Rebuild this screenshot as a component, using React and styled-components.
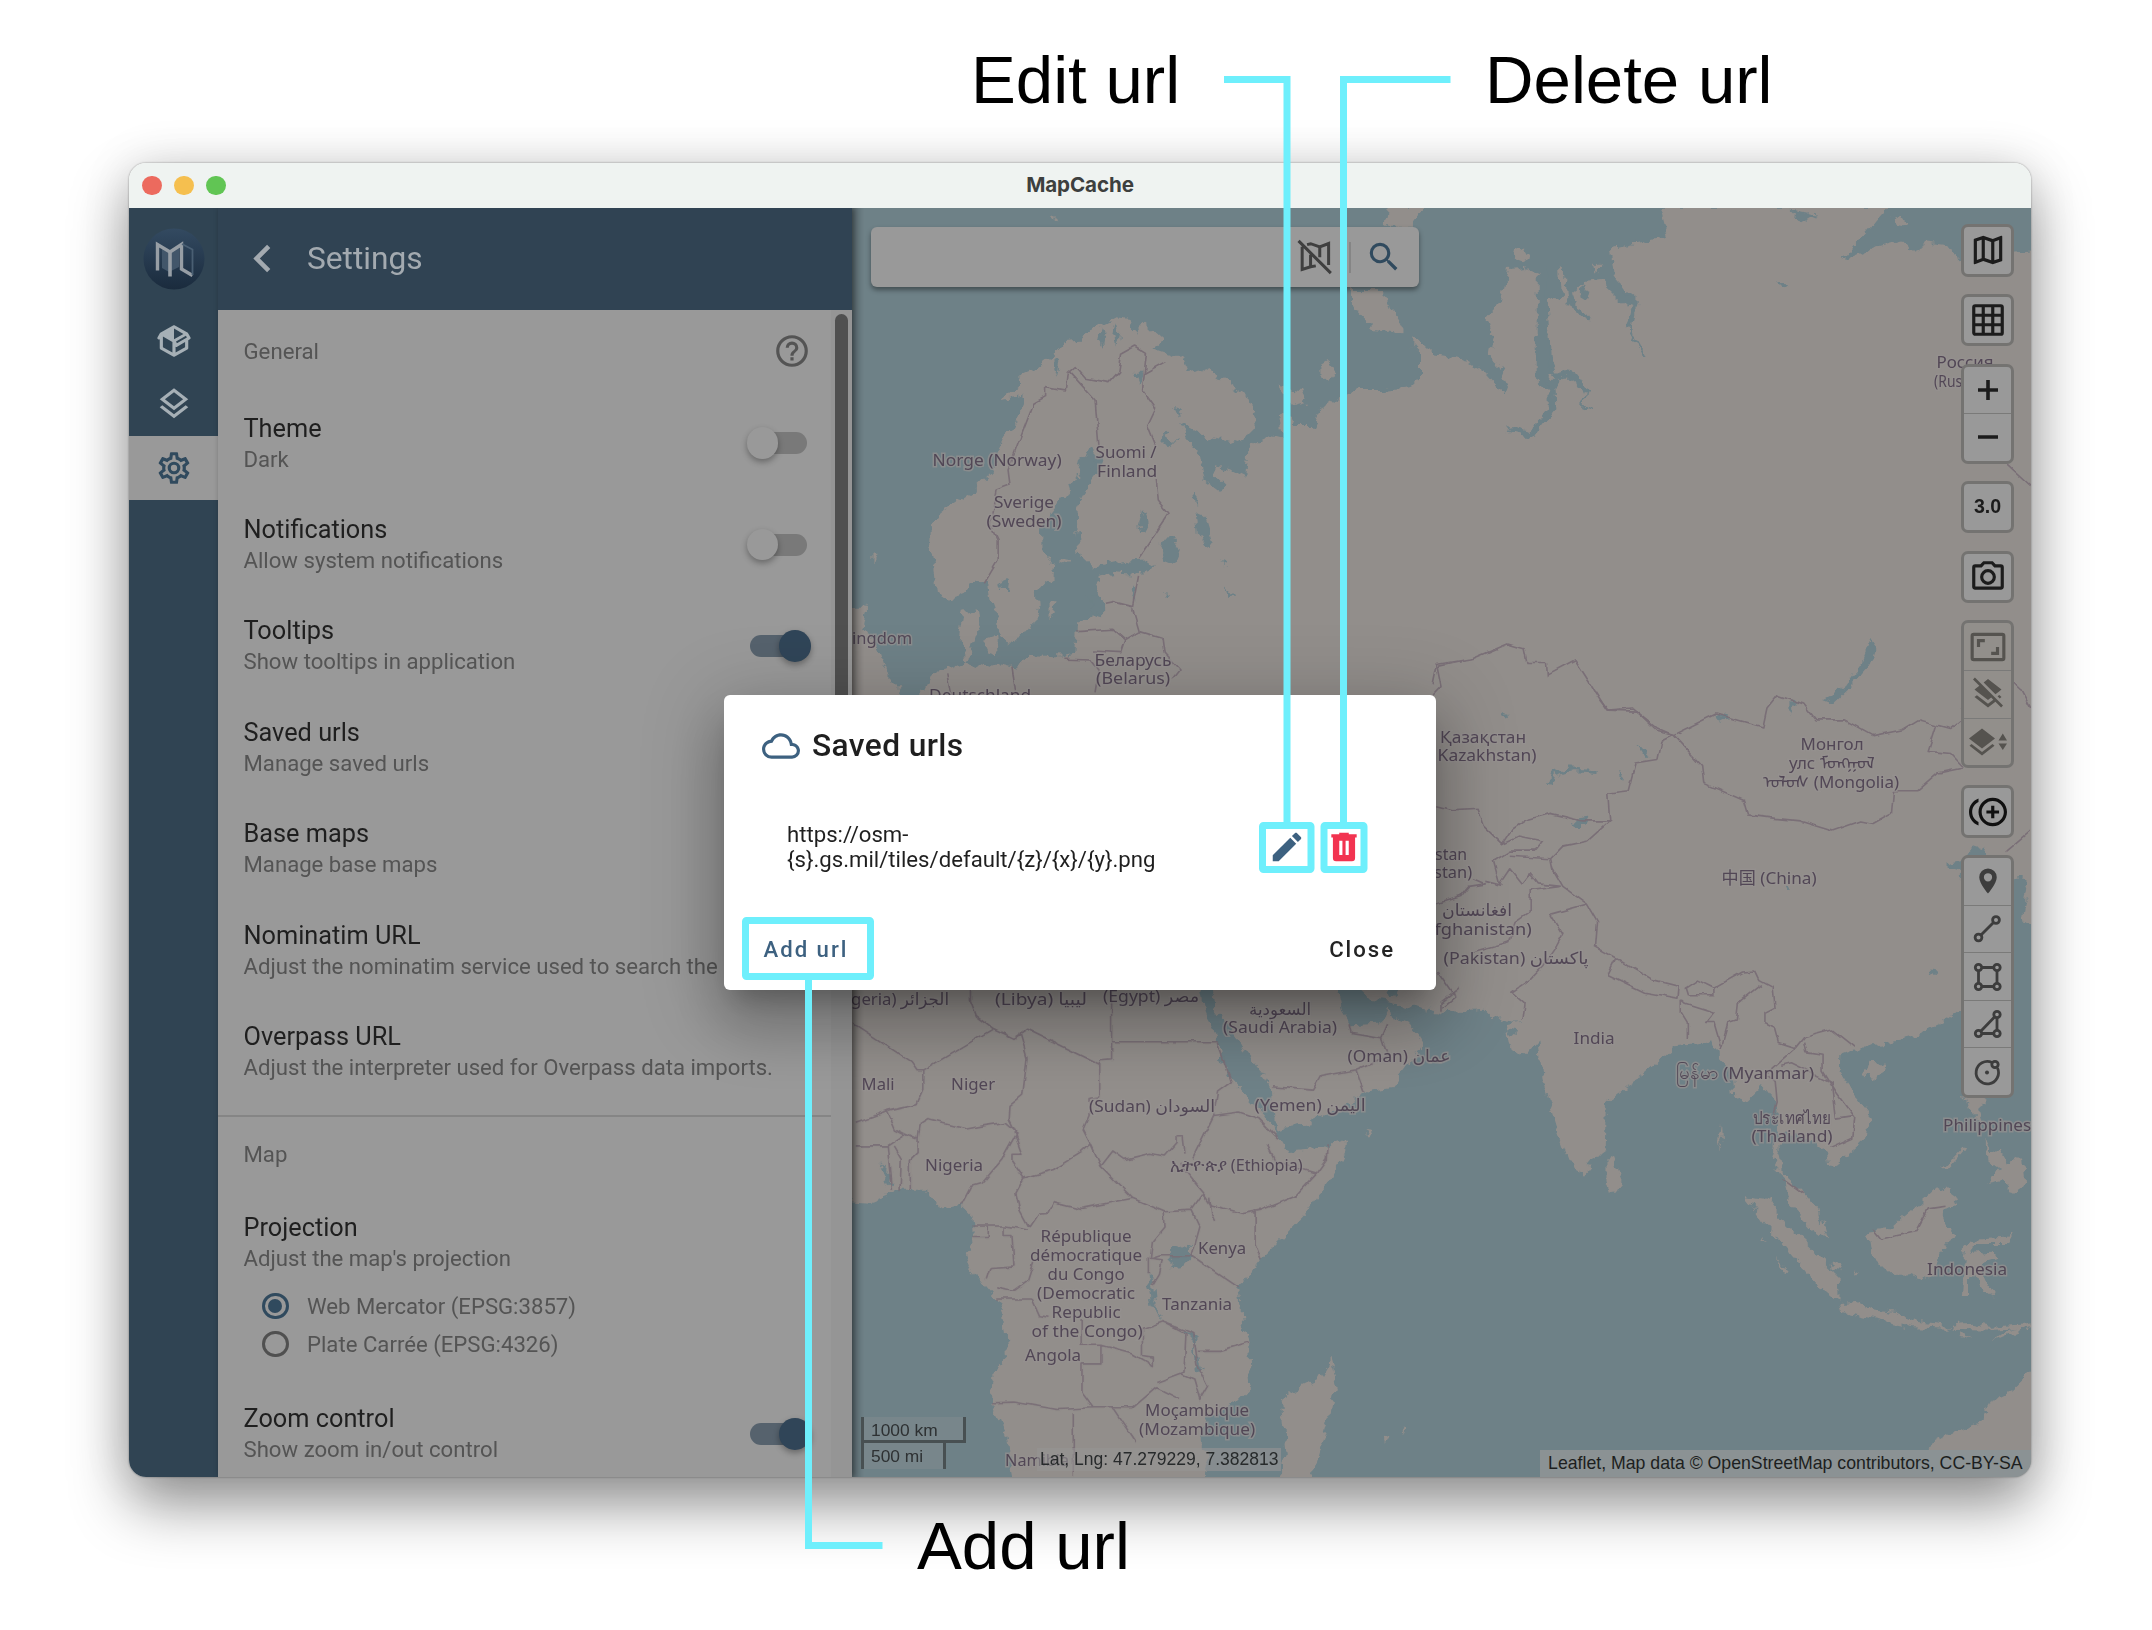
import React from 'react';
import styled, { createGlobalStyle } from 'styled-components';

const GlobalStyle = createGlobalStyle`
  * { box-sizing: border-box; }
  body { margin: 0; background: #fff; }
`;

const Page = styled.main`
  position: relative;
  width: 2152px;
  height: 1630px;
  padding: 163px 0 0 129px;
  overflow: hidden;
  background: #fff;
  font-family: Roboto, sans-serif;
`;

const Window = styled.section`
  position: relative;
  display: flex;
  flex-direction: column;
  width: 1902px;
  height: 1313.5px;
  border-radius: 17px;
  box-shadow: 0 0 2px rgba(0, 0, 0, 0.45), 0 28px 58px rgba(0, 0, 0, 0.42), 0 0 50px rgba(0, 0, 0, 0.1);
`;

const TitleBar = styled.header`
  display: grid;
  grid-template-columns: 1fr auto 1fr;
  align-items: center;
  height: 45px;
  flex: none;
  padding-left: 13px;
  border-radius: 17px 17px 0 0;
  background: #eff3f1;
`;

const Lights = styled.div`
  display: flex;
  gap: 12.5px;
`;

const Light = styled.span`
  width: 19.5px;
  height: 19.5px;
  border-radius: 50%;
  background: ${(p) => p.$color};
`;

const AppTitle = styled.h1`
  margin: 0 13px 0 0;
  color: #3d3f3e;
  font: 700 20.6px/1 Inter, sans-serif;
  letter-spacing: -0.1px;
`;

const Body = styled.div`
  display: flex;
  flex: 1;
  min-height: 0;
  overflow: hidden;
  border-radius: 0 0 17px 17px;
`;

const Rail = styled.nav`
  display: flex;
  flex-direction: column;
  flex: none;
  width: 89px;
  background: #304453;
`;

const LogoSlot = styled.div`
  display: flex;
  align-items: center;
  justify-content: center;
  height: 101px;
`;

const RailItem = styled.div`
  display: flex;
  align-items: center;
  justify-content: center;
  height: 63.6px;
  padding-left: 1px;
  color: ${(p) => (p.$active ? '#304a5e' : '#a6b0b6')};
  background: ${(p) => (p.$active ? '#999' : 'transparent')};
`;

const Panel = styled.aside`
  position: relative;
  z-index: 1;
  display: flex;
  flex-direction: column;
  flex: none;
  width: 634px;
  background: #999;
  box-shadow: 2px 0 6px rgba(0, 0, 0, 0.4);
`;

const PanelHeader = styled.header`
  display: flex;
  align-items: center;
  gap: 17px;
  height: 101.5px;
  flex: none;
  padding-left: 17px;
  background: #304353;
  color: #a3aab0;
`;

const PanelTitle = styled.h2`
  margin: 0;
  font-weight: 400;
  font-size: 31.7px;
  line-height: 1;
`;

const PanelBody = styled.div`
  display: flex;
  flex: 1;
  min-height: 0;
  overflow: hidden;
`;

const Settings = styled.div`
  flex: 1;
  min-width: 0;
`;

const ScrollTrack = styled.div`
  flex: none;
  width: 21px;
  padding: 4px 4px 0;
  background: #959595;
`;

const ScrollThumb = styled.div`
  height: 590px;
  border-radius: 7px;
  background: #505050;
`;

const Subheader = styled.div`
  display: flex;
  align-items: center;
  justify-content: space-between;
  height: ${(p) => p.$height}px;
  padding: 0 20px 1px 25.5px;
  color: #545454;
  font-size: 22.2px;
`;

const Row = styled.div`
  display: flex;
  align-items: center;
  justify-content: space-between;
  height: 101.4px;
  padding: 0 20px 0 25.5px;
`;

const RowText = styled.div`
  display: flex;
  flex-direction: column;
  gap: 5px;
  white-space: nowrap;
`;

const RowTitle = styled.div`
  color: #1f1f1f;
  font-size: 25.3px;
  line-height: 27px;
`;

const RowSub = styled.div`
  color: #545454;
  font-size: 22.17px;
  line-height: 25px;
`;

const Divider = styled.hr`
  height: 2px;
  margin: 12.5px 0 0;
  border: 0;
  background: #858585;
`;

const Track = styled.div`
  display: flex;
  align-items: center;
  justify-content: ${(p) => (p.$on ? 'flex-end' : 'flex-start')};
  flex: none;
  width: 57px;
  height: 22px;
  margin-right: 4px;
  border-radius: 11px;
  background: ${(p) => (p.$on ? '#56626d' : '#797979')};
`;

const Thumb = styled.span`
  width: 31.7px;
  height: 31.7px;
  flex: none;
  margin: 0 -3.5px;
  border-radius: 50%;
  background: ${(p) => (p.$on ? '#304558' : '#999')};
  box-shadow: 0 3px 6px rgba(0, 0, 0, 0.32);
`;

const RadioGroup = styled.div`
  display: flex;
  flex-direction: column;
  margin-top: -6px;
  padding: 0 0 20px 44px;
`;

const RadioRow = styled.label`
  display: flex;
  align-items: center;
  gap: 18.5px;
  height: 38px;
  color: #545454;
  font-size: 22.17px;
`;

const RadioDot = styled.span`
  display: flex;
  align-items: center;
  justify-content: center;
  width: 26.5px;
  height: 26.5px;
  border: 3px solid ${(p) => (p.$on ? '#304a5e' : '#505050')};
  border-radius: 50%;

  &::after {
    content: '';
    width: 14px;
    height: 14px;
    border-radius: 50%;
    background: ${(p) => (p.$on ? '#304a5e' : 'transparent')};
  }
`;

const MapPane = styled.div`
  position: relative;
  flex: 1;
  min-width: 0;
  overflow: hidden;
  background: #6e8187;
`;

const MapDrawing = styled.svg`
  display: block;
`;

const SearchBar = styled.div`
  position: absolute;
  top: 19px;
  left: 18.5px;
  display: flex;
  align-items: center;
  justify-content: flex-end;
  width: 548px;
  height: 60px;
  padding-right: 16px;
  border-radius: 6px;
  background: #999;
  box-shadow: 0 3px 5px rgba(0, 0, 0, 0.4);
  color: #304a5e;
`;

const SearchDivider = styled.span`
  width: 1.5px;
  height: 31px;
  margin: 0 14px 0 15px;
  background: #858585;
`;

const Controls = styled.div`
  position: absolute;
  top: 16px;
  right: 17px;
  display: flex;
  flex-direction: column;
  gap: 17.2px;
`;

const ControlGroup = styled.div`
  width: 53px;
  border: 3px solid #747371;
  border-radius: 7px;
  background: ${(p) => (p.$dim ? '#928f8b' : '#999')};
  overflow: hidden;
`;

const ControlButton = styled.div`
  display: flex;
  align-items: center;
  justify-content: center;
  height: 46.6px;
  color: ${(p) => p.$tone || '#1c1c1c'};
  font: 700 19.6px/1 'Liberation Sans', sans-serif;

  & + & {
    height: 47.55px;
    border-top: 1.5px solid #7a7a79;
  }
`;

const ScaleBox = styled.div`
  position: absolute;
  left: 9px;
  bottom: 8px;
  display: flex;
  flex-direction: column;
  align-items: flex-start;
`;

const ScaleLine = styled.div`
  width: ${(p) => p.$width}px;
  height: 26px;
  padding-left: 7px;
  border: 3px solid #485052;
  border-top: 0;
  border-bottom-width: ${(p) => (p.$lower ? 0 : 3)}px;
  background: rgba(153, 153, 153, 0.25);
  color: #2e3133;
  font: 17.4px/27.500px 'Liberation Sans', sans-serif;
`;

const Coordinates = styled.div`
  position: absolute;
  left: 185px;
  bottom: 6px;
  padding: 0 3px;
  background: rgba(150, 149, 148, 0.6);
  color: #272a2b;
  font: 17.5px/23px 'Liberation Sans', sans-serif;
  white-space: nowrap;
`;

const Attribution = styled.div`
  position: absolute;
  right: 0;
  bottom: 0;
  padding: 0 8.5px 0 8px;
  background: #8b9294;
  color: #1d1f20;
  font: 17.7px/27px 'Liberation Sans', sans-serif;
  white-space: nowrap;
`;

const Dialog = styled.section`
  position: absolute;
  top: 531.5px;
  left: 595px;
  z-index: 3;
  display: flex;
  flex-direction: column;
  width: 712px;
  height: 295px;
  border-radius: 6px;
  background: #fff;
  box-shadow: 0 17px 24px -11px rgba(0, 0, 0, 0.22), 0 38px 60px 5px rgba(0, 0, 0, 0.16),
    0 14px 73px 13px rgba(0, 0, 0, 0.18);
`;

const DialogTitle = styled.h3`
  display: flex;
  align-items: center;
  gap: 12.5px;
  margin: 0;
  padding: 32px 0 0 37.5px;
  color: #1f1f1f;
  font-weight: 500;
  font-size: 31.7px;
  line-height: 38px;
  letter-spacing: 0.4px;
`;

const UrlRow = styled.div`
  display: flex;
  align-items: center;
  margin-top: 57px;
  padding: 0 73px 0 63px;
  color: #1f1f1f;
  font-size: 22.17px;
  line-height: 25px;
`;

const UrlText = styled.div`
  flex: 1;
`;

const UrlActions = styled.div`
  display: flex;
  gap: 19px;
`;

const DialogActions = styled.footer`
  display: flex;
  justify-content: space-between;
  padding: 64px 41px 0 39.5px;
`;

const TextButton = styled.button`
  padding: 0;
  border: 0;
  background: none;
  color: ${(p) => p.$color};
  font: 500 22.17px/26px Roboto, sans-serif;
  letter-spacing: 1.98px;
`;

const CalloutLines = styled.svg`
  position: absolute;
  inset: 0;
  z-index: 4;
`;

const CalloutText = styled.div`
  position: absolute;
  top: ${(p) => p.$top}px;
  left: ${(p) => p.$left}px;
  color: #000;
  font: 67.2px/76px 'Liberation Sans', sans-serif;
  white-space: nowrap;
`;

const paths = {
  package:
    'M2,10.96C1.5,10.68 1.35,10.07 1.63,9.59L3.13,7C3.24,6.8 3.41,6.66 3.6,6.58L11.43,2.18C11.59,2.06 11.79,2 12,2C12.21,2 12.41,2.06 12.57,2.18L20.47,6.62C20.66,6.72 20.82,6.88 20.91,7.08L22.36,9.6C22.64,10.08 22.47,10.69 22,10.96L21,11.54V16.5C21,16.88 20.79,17.21 20.47,17.38L12.57,21.82C12.41,21.94 12.21,22 12,22C11.79,22 11.59,21.94 11.43,21.82L3.53,17.38C3.21,17.21 3,16.88 3,16.5V10.96C2.7,11.13 2.32,11.14 2,10.96M12,4.15V4.15L12,10.85V10.85L17.96,7.5L12,4.15M5,15.91L11,19.29V12.58L5,9.21V15.91M19,15.91V12.69L14,15.59C13.67,15.77 13.3,15.76 13,15.6V19.29L19,15.91M13.85,13.36L20.13,9.73L19.55,8.72L13.27,12.35L13.85,13.36Z',
  layersOutline:
    'M12,18.54L19.37,12.8L21,14.07L12,21.07L3,14.07L4.62,12.81L12,18.54M12,16L3,9L12,2L21,9L12,16M12,4.53L6.26,9L12,13.47L17.74,9L12,4.53Z',
  cog: 'M12,8A4,4 0 0,1 16,12A4,4 0 0,1 12,16A4,4 0 0,1 8,12A4,4 0 0,1 12,8M12,10A2,2 0 0,0 10,12A2,2 0 0,0 12,14A2,2 0 0,0 14,12A2,2 0 0,0 12,10M10,22C9.75,22 9.54,21.82 9.5,21.58L9.13,18.93C8.5,18.68 7.96,18.34 7.44,17.94L4.95,18.95C4.73,19.03 4.46,18.95 4.34,18.73L2.34,15.27C2.21,15.05 2.27,14.78 2.46,14.63L4.57,12.97L4.5,12L4.57,11L2.46,9.37C2.27,9.22 2.21,8.95 2.34,8.73L4.34,5.27C4.46,5.05 4.73,4.96 4.95,5.05L7.44,6.05C7.96,5.66 8.5,5.32 9.13,5.07L9.5,2.42C9.54,2.18 9.75,2 10,2H14C14.25,2 14.46,2.18 14.5,2.42L14.87,5.07C15.5,5.32 16.04,5.66 16.56,6.05L19.05,5.05C19.27,4.96 19.54,5.05 19.66,5.27L21.66,8.73C21.79,8.95 21.73,9.22 21.54,9.37L19.43,11L19.5,12L19.43,13L21.54,14.63C21.73,14.78 21.79,15.05 21.66,15.27L19.66,18.73C19.54,18.95 19.27,19.04 19.05,18.95L16.56,17.95C16.04,18.34 15.5,18.68 14.87,18.93L14.5,21.58C14.46,21.82 14.25,22 14,22H10M11.25,4L10.88,6.61C9.68,6.86 8.62,7.5 7.85,8.39L5.44,7.35L4.69,8.65L6.8,10.2C6.4,11.37 6.4,12.64 6.8,13.8L4.68,15.36L5.43,16.66L7.86,15.62C8.63,16.5 9.68,17.14 10.87,17.38L11.24,20H12.76L13.13,17.39C14.32,17.14 15.37,16.5 16.14,15.62L18.57,16.66L19.32,15.36L17.2,13.81C17.6,12.64 17.6,11.37 17.2,10.2L19.31,8.65L18.56,7.35L16.15,8.39C15.38,7.5 14.32,6.86 13.12,6.62L12.75,4H11.25Z',
  help: 'M11,18H13V16H11V18M12,2A10,10 0 0,0 2,12A10,10 0 0,0 12,22A10,10 0 0,0 22,12A10,10 0 0,0 12,2M12,20C7.59,20 4,16.41 4,12C4,7.59 7.59,4 12,4C16.41,4 20,7.59 20,12C20,16.41 16.41,20 12,20M12,6A4,4 0 0,0 8,10H10A2,2 0 0,1 12,8A2,2 0 0,1 14,10C14,12 11,11.75 11,15H13C13,12.75 16,12.5 16,10A4,4 0 0,0 12,6Z',
  chevronLeft: 'M15.41,16.58L10.83,12L15.41,7.41L14,6L8,12L14,18L15.41,16.58Z',
  magnify:
    'M9.5,3A6.5,6.5 0 0,1 16,9.5C16,11.11 15.41,12.59 14.44,13.73L14.71,14H15.5L20.5,19L19,20.5L14,15.5V14.71L13.73,14.44C12.59,15.41 11.11,16 9.5,16A6.5,6.5 0 0,1 3,9.5A6.5,6.5 0 0,1 9.5,3M9.5,5C7,5 5,7 5,9.5C5,12 7,14 9.5,14C12,14 14,12 14,9.5C14,7 12,5 9.5,5Z',
  cloud:
    'M19.35,10.04C18.67,6.59 15.64,4 12,4C9.11,4 6.6,5.64 5.35,8.04C2.34,8.36 0,10.91 0,14A6,6 0 0,0 6,20H19A5,5 0 0,0 24,15C24,12.36 21.95,10.22 19.35,10.04M19,18H6A4,4 0 0,1 2,14C2,11.95 3.53,10.24 5.56,10.03L6.63,9.92L7.13,8.97C8.08,7.14 9.94,6 12,6C14.62,6 16.88,7.86 17.39,10.43L17.69,11.93L19.22,12.04C20.78,12.14 22,13.45 22,15A3,3 0 0,1 19,18Z',
  pencil:
    'M20.71,7.04C21.1,6.65 21.1,6 20.71,5.63L18.37,3.29C18,2.9 17.35,2.9 16.96,3.29L15.12,5.12L18.87,8.87M3,17.25V21H6.75L17.81,9.93L14.06,6.18L3,17.25Z',
  trash:
    'M9,3V4H4V6H5V19A2,2 0 0,0 7,21H17A2,2 0 0,0 19,19V6H20V4H15V3H9M9,8H11V17H9V8M13,8H15V17H13V8Z',
  map: 'M20.5,3L20.34,3.03L15,5.1L9,3L3.36,4.9C3.15,4.97 3,5.15 3,5.38V20.5A0.5,0.5 0 0,0 3.5,21L3.66,20.97L9,18.9L15,21L20.64,19.1C20.85,19.03 21,18.85 21,18.62V3.5A0.5,0.5 0 0,0 20.5,3M10,5.47L14,6.87V18.53L10,17.13V5.47M5,6.46L8,5.45V17.15L5,18.31V6.46M19,17.54L16,18.55V6.86L19,5.7V17.54Z',
  grid: 'M10,4V8H14V4H10M16,4V8H20V4H16M16,10V14H20V10H16M16,16V20H20V16H16M14,20V16H10V20H14M8,20V16H4V20H8M8,14V10H4V14H8M8,8V4H4V8H8M10,14H14V10H10V14M4,2H20A2,2 0 0,1 22,4V20A2,2 0 0,1 20,22H4C2.92,22 2,21.1 2,20V4A2,2 0 0,1 4,2Z',
  camera:
    'M20,4H16.83L15,2H9L7.17,4H4A2,2 0 0,0 2,6V18A2,2 0 0,0 4,20H20A2,2 0 0,0 22,18V6A2,2 0 0,0 20,4M20,18H4V6H8.05L9.88,4H14.12L15.95,6H20V18M12,7A5,5 0 0,0 7,12A5,5 0 0,0 12,17A5,5 0 0,0 17,12A5,5 0 0,0 12,7M12,15A3,3 0 0,1 9,12A3,3 0 0,1 12,9A3,3 0 0,1 15,12A3,3 0 0,1 12,15Z',
  overscan:
    'M19,12H17V15H14V17H19V12M7,9H10V7H5V12H7V9M21,3H3A2,2 0 0,0 1,5V19A2,2 0 0,0 3,21H21A2,2 0 0,0 23,19V5A2,2 0 0,0 21,3M21,19H3V5H21V19Z',
  layersOff:
    'M3.27,1L2,2.27L6.22,6.5L3,9L4.63,10.27L12,16L14.1,14.37L15.53,15.8L12,18.54L4.63,12.81L3,14.07L12,21.07L16.95,17.22L20.73,21L22,19.73L3.27,1M19.36,10.27L21,9L12,2L9.09,4.27L16.96,12.15L19.36,10.27M19.81,15L21,14.07L19.57,12.64L18.38,13.56L19.81,15Z',
  multiplePlus:
    'M16,8H14V11H11V13H14V16H16V13H19V11H16M2,12C2,9.21 3.64,6.8 6,5.68V3.5C2.5,4.76 0,8.09 0,12C0,15.91 2.5,19.24 6,20.5V18.32C3.64,17.2 2,14.79 2,12M15,3C10.04,3 6,7.04 6,12C6,16.96 10.04,21 15,21C19.96,21 24,16.96 24,12C24,7.04 19.96,3 15,3M15,19C11.14,19 8,15.86 8,12C8,8.14 11.14,5 15,5C18.86,5 22,8.14 22,12C22,15.86 18.86,19 15,19Z',
  marker:
    'M12,12.3A3.3,3.3 0 0,1 8.7,9A3.3,3.3 0 0,1 12,5.7A3.3,3.3 0 0,1 15.3,9A3.3,3.3 0 0,1 12,12.3M12,2A7,7 0 0,0 5,9C5,14.25 12,22 12,22C12,22 19,14.25 19,9A7,7 0 0,0 12,2Z',
};

const Icon = ({ name, size = 38 }) => (
  <svg width={size} height={size} viewBox="0 0 24 24" fill="currentColor" fillRule="evenodd">
    <path d={paths[name]} />
  </svg>
);

const LineIcon = ({ children, width = 3.6 }) => (
  <svg width="47" height="46" viewBox="0 0 47 46" fill="none" stroke="currentColor" strokeWidth={width}>
    {children}
  </svg>
);

const MapOffIcon = () => (
  <svg width="38" height="38" viewBox="0 0 24 24" fill="none" stroke="#3f3f3f" strokeWidth="1.9">
    <path d="M1.6,1.8L22,22.2M3.9,5.5V19.9L9.2,18.2L12.5,17.6M9.2,18.2V10.500M7,4.2L9.3,3.6L15,5.6L20.6,3.5V17M15,5.6V12.2" />
  </svg>
);

const Logo = () => (
  <svg width="62" height="64" viewBox="0 0 62 64">
    <defs>
      <linearGradient id="orb" x1="0" y1="0" x2="0" y2="1">
        <stop offset="0" stopColor="#334a61" />
        <stop offset="1" stopColor="#1a2b3d" />
      </linearGradient>
    </defs>
    <circle cx="31" cy="32" r="30.5" fill="url(#orb)" />
    <path d="M19,21L26,25V45L19,41ZM28,24L36,20V40L28,44Z" fill="#42566a" />
    <path d="M14.500,43.500V17.500L27,25L38.500,17.500V42L49.500,48.500" fill="none" stroke="#979ea5" strokeWidth="3.400" />
    <path d="M27,24V49.500" stroke="#979ea5" strokeWidth="3.600" />
    <path d="M39,17L49.500,22.500V48" fill="none" stroke="#4a5f73" strokeWidth="1.800" />
  </svg>
);

/* The map is drawn in four sheets, each with its own grid origin and scale. */
const sheets = [
  {
    id: 'north-west',
    transform: 'translate(840 190) scale(.3954 .3333)',
    land: [
      'M230,1010L228,1060 240,1150 245,1205 275,1230 310,1215 350,1170 372,1180 378,1230 400,1300 405,1345 435,1360 450,1335 485,1320 500,1240 497,1200 540,1160 545,1120 510,1080 508,1010 540,960 565,920 600,860 610,800 640,780 665,810 655,850 620,900 598,950 600,1010 605,1090 640,1130 720,1110 775,1105 800,1125 750,1155 700,1150 655,1160 640,1190 665,1230 668,1280 635,1270 600,1300 595,1390 560,1400 480,1395 440,1430 400,1420 360,1435 325,1420 300,1340 310,1270 350,1255 355,1300 340,1350 330,1410 270,1440 230,1450 210,1500 160,1570 1568,1570 1568,510 1510,500 1500,560 1450,570 1450,590 1380,600 1310,600 1270,615 1215,660 1195,705 1150,705 1130,660 1110,670 1118,750 1070,735 1030,780 1025,860 990,840 955,825 945,850 980,890 960,905 920,870 905,780 870,730 860,700 920,735 1000,762 1040,730 1055,680 1030,620 970,570 920,530 880,540 865,495 840,500 790,480 820,450 770,395 745,430 735,390 700,385 650,415 620,430 610,455 560,460 545,490 490,540 450,560 450,590 410,630 470,620 440,700 415,740 400,780 390,840 340,900 300,930 250,970Z',
      'M1385,50L1480,50 1445,110 1380,110ZM1290,300L1378,300 1390,350 1420,410 1420,430 1350,420 1310,370 1290,330Z',
      'M1215,530L1235,515 1255,545 1235,580 1215,560ZM1450,445L1465,450 1495,505 1475,500 1450,470ZM1110,590L1165,600 1180,640 1145,650Z',
      'M34,1250L70,1250 60,1310 100,1390 120,1460 155,1500 140,1570 0,1570 0,1250Z',
      'M360,1350L395,1335 400,1400 375,1390ZM530,1240L548,1240 530,1290ZM82,1090L95,1088 82,1130Z',
      'M540,75L552,80 545,92ZM550,1105L585,1110 570,1120Z',
    ],
    water: [
      'M815,1040L835,1038 862,1085 850,1120 820,1105 810,1070Z',
      'M900,970L925,990 942,1055 930,1075 905,1030Z',
      'M630,1220L668,1225 668,1275 635,1265ZM400,1180L430,1165 425,1200 405,1200ZM745,1180L750,1235 735,1200ZM975,1185L1000,1220 985,1220Z',
      'M745,545L765,545 755,575ZM760,1000L770,960 778,1000 765,1030ZM820,720L850,750 830,775 818,760ZM845,650L865,660 855,675ZM890,900L905,920 895,945ZM820,1210L832,1212 825,1224ZM965,1110L980,1118 970,1126Z',
      'M660,415L668,440 662,480 655,450ZM700,400L706,430 698,470 694,430ZM540,500L556,520 548,560 540,530ZM635,800L655,830 650,860Z',
    ],
    rivers: [],
    borders: [
      'M365,1180L400,1110 400,1050 380,1000 395,900 430,885 425,840 490,640 520,620 520,590 570,600 575,550 595,530 620,565 680,578 705,545 712,490 745,468 775,490 765,600 798,655 778,705 800,770',
      'M580,545L645,630 655,770M800,870L805,930 832,970 770,1080 755,1105M770,550L823,515',
      'M755,1155L740,1250 690,1235 670,1240M740,1255L757,1325 720,1350 690,1318 600,1325M720,1350L710,1385 640,1380M757,1325L815,1345 820,1390 860,1440 840,1470M570,1408L635,1410 655,1440 645,1510M270,1450L280,1515M435,1430L445,1515',
      'M1500,1515L1520,1490 1510,1430 1568,1415',
    ],
  },
  {
    id: 'north-east',
    transform: 'translate(1420 190) scale(.4082 .3954)',
    land: [
      'M0,385L30,415 100,425 150,455 205,515 215,490 190,440 168,420 175,370 165,320 200,280 218,200 260,195 295,210 300,460 335,460 318,420 310,290 345,260 340,190 355,210 362,290 420,320 430,335 385,300 370,262 400,235 440,230 500,290 525,280 475,220 468,150 550,130 605,118 595,80 585,40 1150,40 1090,110 1030,180 1110,145 1180,125 1195,155 1240,135 1310,145 1315,180 1496,150 1600,150 1600,1568 0,1568Z',
      'M235,155L255,148 270,175 250,185 232,178ZM1155,70L1180,60 1192,80 1170,98ZM430,180L442,190 438,210Z',
    ],
    water: [
      'M1105,1135L1115,1150 1095,1210 1060,1250 1010,1300 985,1290 1040,1260 1080,1200ZM875,235L905,236 888,250ZM720,1325L755,1335 735,1345ZM525,1405L560,1425 540,1430ZM395,240L415,255 410,275 390,262Z',
      'M905,50L975,60 935,85ZM905,1290L918,1300 905,1330ZM485,1465L500,1490 490,1490ZM205,1325L218,1330 210,1340Z',
    ],
    rivers: [
      [24, 'M298,200V470L322,500'],
      [18, 'M322,480L325,550L275,618L220,603M328,475C365,450 395,475 405,515'],
      [6, 'M405,510L400,545L425,553M525,280L515,360L550,425'],
      [12, 'M500,260L525,280L510,350M362,290L420,325'],
      [9, 'M318,1500L325,1478L370,1465L435,1470'],
    ],
    borders: [
      'M30,1250L40,1200 130,1185 215,1148 255,1160 262,1195 310,1195 312,1225 380,1188 458,1315 520,1310 580,1360 620,1378 725,1325 840,1358 850,1310 875,1278 940,1300 970,1340 1040,1340 1110,1380 1180,1365 1220,1340 1300,1362 1325,1340 1335,1280 1370,1225 1440,1230 1470,1260 1496,1310',
      'M1265,1355L1245,1420 1300,1425 1332,1460M1440,695L1496,748',
    ],
  },
  {
    id: 'south-east',
    transform: 'translate(1420 700) scale(.4082 .5038)',
    land: [
      'M0,610L60,622 155,615 180,635 205,632 230,640 255,640 205,645 215,680 260,705 290,678 300,750 340,860 375,935 400,940 430,910 455,895 458,800 510,765 540,750 610,700 612,688 700,682 715,672 730,705 765,735 770,790 800,800 840,768 870,800 880,850 862,905 890,950 905,1000 960,1050 995,1070 975,1010 930,970 890,940 878,895 890,860 960,870 1000,895 1005,930 1050,900 1095,870 1100,820 1060,780 1028,740 1030,700 1065,690 1100,690 1200,670 1280,640 1330,610 1400,560 1440,500 1440,420 1380,390 1330,370 1330,345 1290,335 1290,322 1330,315 1385,285 1380,310 1345,335 1400,350 1450,355 1480,350 1490,370 1475,440 1496,450 1600,450 1600,0 0,0Z',
      'M452,915L470,905 495,955 485,975 460,978 452,955Z',
      'M1088,740L1105,720 1140,722 1128,745 1100,753Z',
      'M795,985L850,990 900,1045 960,1090 1025,1140 1028,1188 990,1175 920,1110 870,1060Z',
      'M1028,1195L1070,1193 1110,1210 1170,1215 1215,1232 1290,1240 1290,1248 1210,1245 1130,1232 1035,1215Z',
      'M1300,1240L1350,1236 1390,1244 1470,1240 1496,1235 1496,1245 1400,1250 1300,1248ZM1405,1275L1440,1250 1496,1243 1440,1262ZM1320,1255L1355,1268 1325,1262Z',
      'M1100,1055L1150,1050 1220,1000 1270,962 1310,985 1318,1002 1280,1010 1290,1050 1310,1065 1285,1080 1270,1120 1240,1152 1200,1140 1150,1142 1110,1110Z',
      'M1335,1085L1350,1070 1440,1065 1455,1055 1440,1080 1360,1080 1345,1100 1400,1095 1410,1110 1370,1120 1390,1160 1405,1182 1380,1175 1362,1140 1345,1145 1345,1185 1325,1185 1330,1130Z',
      'M1225,1490L1300,1455 1370,1435 1400,1390 1450,1370 1496,1335 1600,1300 1600,1600 1100,1600Z',
      'M1335,785L1385,785 1370,815 1380,840 1345,815ZM1385,870L1400,900 1420,890 1440,920 1460,910 1480,910 1485,960 1450,980 1425,955 1390,960 1420,930 1390,910ZM1280,932L1330,888 1334,892 1285,936Z',
      'M1010,1115L1040,1135 1015,1130ZM1062,1130L1080,1135 1068,1142ZM835,1060L850,1070 840,1068ZM868,1100L905,1135 900,1140ZM740,840L742,870 730,895ZM0,665L12,680 0,700Z',
    ],
    water: ['M375,240L415,235 405,250 380,250ZM890,370L912,374 898,380ZM1250,535L1268,537 1258,546ZM205,655L240,660 225,670Z'],
    rivers: [],
    borders: [
      'M620,68L690,130 695,165 795,200 805,228 870,235 930,240 1010,260 1080,240 1110,245 1155,225 1160,180 1220,180 1270,145 1330,135',
      'M440,0L460,20 530,22 580,60 620,68 590,80 580,120 527,127 510,180 460,185 465,240 410,280 350,290 320,315 325,335 350,370 410,405 435,440 430,490 480,512',
      'M42,210L80,218 140,215 155,250 200,285 220,260 260,238 320,225 400,240 465,240M200,285L240,270 300,280 280,300 220,300 180,320 195,365 220,335 250,365 270,345 290,365 345,370M220,310L320,315',
      'M480,512L570,555 635,568 632,592 550,580 460,545ZM650,572L680,556 720,572 720,585 655,585Z',
      'M345,370L270,378 270,420 235,440 220,480 130,500M410,405L320,425 350,465 330,495 300,530 270,555 225,580 255,600 250,635M42,540L85,590 55,610M130,355L160,365 120,370 100,390 42,405M160,360L200,368',
      'M720,572L790,540 820,538 830,555 865,570 870,610 845,620 845,640 870,650 880,680 920,690 940,670 1010,655 1065,690',
      'M640,595L640,620 655,640 655,675M640,595L650,602 720,620 700,640 720,640 738,690 755,640 775,635 780,600 835,565',
      'M920,690L850,740 870,755 875,800 865,830M940,680L945,700 985,705 985,735 1020,780 1065,830 1060,870 1005,890M885,725L910,720 960,740 1010,760 1020,830 1060,825M890,950L940,980M1110,1050L1130,1070 1215,1055 1245,1010 1285,1005M1435,302L1460,285 1496,260',
    ],
  },
  {
    id: 'south-west',
    transform: 'translate(840 960) scale(.3954 .338)',
    land: [
      'M0,60L905,60 925,170 955,230 965,300 990,360 1040,420 1080,470 1105,520 1130,568 1200,560 1280,528 1278,570 1240,660 1170,760 1065,885 1010,970 1020,1080 1035,1140 1040,1260 1000,1310 930,1360 915,1400 915,1440 935,1450 915,1530 920,1600 440,1600 440,1527 420,1400 385,1310 385,1270 400,1200 425,1170 415,1060 395,1000 330,910 318,870 340,840 335,760 305,725 250,732 225,680 160,680 80,718 0,712Z',
      'M940,60L950,150 1000,230 1050,310 1095,380 1100,500 1190,480 1260,440 1330,395 1350,385 1390,380 1430,320 1475,240 1440,190 1395,170 1390,140 1370,185 1290,190 1270,150 1255,60Z',
      'M1300,60L1345,115 1420,130 1500,150 1568,155 1568,60Z',
      'M1240,1175L1262,1270 1248,1280 1230,1380 1195,1527 1190,1600 1120,1600 1115,1500 1130,1460 1118,1320 1130,1285 1210,1240Z',
      'M1325,505L1352,510 1340,516ZM1375,1410L1388,1420 1378,1432ZM1420,1385L1432,1392 1426,1408Z',
    ],
    water: [
      'M840,850L870,838 890,850 890,880 865,912 838,915Z',
      'M778,935L790,940 795,1005 820,1070 790,1020ZM870,1100L895,1105 905,1190 915,1220 900,1215 895,1130ZM100,600L130,640 125,670ZM1395,60L1410,60 1405,115 1385,100Z',
    ],
    rivers: [],
    borders: [
      'M36,190L180,300 195,325 212,325 388,203 345,165 330,120 330,88M388,203L440,232 475,205 655,308 658,298 687,295 687,88M687,242H955',
      'M212,325L212,380 195,425 120,445 40,480M455,215L473,290 462,400 430,430 428,470 445,510M195,530L200,490 225,472 320,500 365,490 420,480 440,500 445,515 410,590 360,660 330,670 305,725',
      'M195,530L195,570 178,590 178,680M120,445L140,500 165,515 195,530M40,550H120L165,515M120,552L130,680M135,550L155,590 152,680M440,510L460,575 435,575 435,595 465,645 445,690 455,740 478,790M465,645L540,620 610,570 635,545 660,610 740,705',
      'M657,308V405L630,410 630,460 615,500 635,545M955,242L990,360 955,390 945,460 890,590M945,460L1010,450 1060,470 1110,530M660,610L690,565 720,590 785,572 820,580 850,540 850,520 865,520 870,570M1080,545L1100,595 1205,630M865,600L870,620 920,690 890,740 820,745 740,705M740,705L610,735 540,715 525,750 500,752 478,790',
      'M920,690L940,725 1020,750 1065,740 1150,700 1205,630 1230,590 1232,545M935,700L940,750 950,775M1050,740V840L1065,885M890,740L910,790 890,875 1010,970M890,875H810L785,885 790,835 822,790 820,745M785,885L815,890 808,930 790,965M335,787H420L475,798M375,790V818H335M415,790L415,812 435,812 440,905 380,910 370,945M490,895L475,950 440,980 395,970',
      'M395,1003H485L505,1055 530,1060M610,1065V1140H660V1195H612V1280L640,1325M385,1310L440,1308 550,1330 640,1325 690,1325 740,1325 800,1265M660,1140L740,1165 790,1200 790,1175 765,1170 765,1090 815,1070 875,1105 870,1220 800,1250M905,1155H960L1035,1130M780,880V930M815,1070L895,1105 905,1200 930,1260 910,1300 895,1240 865,1225M590,1340V1527M690,1325L750,1430M800,1265L860,1300',
      'M1095,375L1195,385 1215,345 1305,325 1325,390M1305,325L1385,285 1370,230 1295,215 1290,190M1385,190L1370,230M1568,80L1520,125 1520,150',
    ],
  },
];

/* x centre, baseline, width, text */
const labels = [
  [998, 467, 129, 'Norge (Norway)'],
  [1127, 459, 61, 'Suomi /'],
  [1128, 478, 60, 'Finland'],
  [1025, 509, 60, 'Sverige'],
  [1025, 528, 75, '(Sweden)'],
  [883, 645, 60, 'ingdom'],
  [1134, 667, 77, 'Беларусь'],
  [1134, 685, 74, '(Belarus)'],
  [981, 702, 102, 'Deutschland'],
  [1966, 369, 57, 'Россия'],
  [1949, 388, 28, '(Rus'],
  [1484, 744, 86, 'Қазақстан'],
  [1488, 762, 99, 'Kazakhstan)'],
  [1833, 751, 63, 'Монгол'],
  [1833, 770, 86, 'улс ᠮᠣᠩᠭᠣᠯ'],
  [1832, 789, 136, 'ᠤᠯᠤᠰ (Mongolia)'],
  [1770, 885, 95, '中国 (China)'],
  [1452, 861, 32, 'stan'],
  [1454, 879, 38, 'stan)'],
  [1478, 917, 70, 'افغانستان'],
  [1484, 936, 97, 'fghanistan)'],
  [1517, 965, 145, '(Pakistan) پاکستان'],
  [1595, 1045, 41, 'India'],
  [1746, 1080, 138, 'မြန်မာ (Myanmar)'],
  [1793, 1125, 78, 'ประเทศไทย'],
  [1793, 1143, 81, '(Thailand)'],
  [1988, 1132, 88, 'Philippines'],
  [1968, 1276, 80, 'Indonesia'],
  [901, 1006, 98, 'geria) الجزائر'],
  [1042, 1006, 92, '(Libya) ليبيا'],
  [1152, 1003, 96, '(Egypt) مصر'],
  [1281, 1016, 62, 'السعودية'],
  [1281, 1034, 114, '(Saudi Arabia)'],
  [1400, 1063, 103, '(Oman) عمان'],
  [879, 1091, 33, 'Mali'],
  [974, 1091, 44, 'Niger'],
  [1153, 1113, 126, '(Sudan) السودان'],
  [1311, 1112, 111, '(Yemen) اليمن'],
  [955, 1172, 58, 'Nigeria'],
  [1237, 1172, 133, 'ኢትዮጵያ (Ethiopia)'],
  [1087, 1243, 91, 'République'],
  [1087, 1262, 112, 'démocratique'],
  [1087, 1281, 77, 'du Congo'],
  [1087, 1300, 98, '(Democratic'],
  [1087, 1319, 69, 'Republic'],
  [1088, 1338, 111, 'of the Congo)'],
  [1223, 1255, 48, 'Kenya'],
  [1198, 1311, 70, 'Tanzania'],
  [1054, 1362, 56, 'Angola'],
  [1198, 1417, 104, 'Moçambique'],
  [1198, 1436, 116, '(Mozambique)'],
  [1038, 1467, 64, 'Namibia'],
];

const WorldMap = () => (
  <MapDrawing width="1179" height="1269" viewBox="852 208 1179 1269">
    <defs>
      <filter id="coast" filterUnits="userSpaceOnUse" x="840" y="196" width="1203" height="1293" colorInterpolationFilters="sRGB">
        <feTurbulence type="fractalNoise" baseFrequency="0.09" numOctaves="3" seed="4" />
        <feDisplacementMap in="SourceGraphic" scale="13" xChannelSelector="R" yChannelSelector="G" />
      </filter>
      <filter id="frontier" filterUnits="userSpaceOnUse" x="840" y="196" width="1203" height="1293" colorInterpolationFilters="sRGB">
        <feTurbulence type="fractalNoise" baseFrequency="0.07" numOctaves="2" seed="9" />
        <feDisplacementMap in="SourceGraphic" scale="6" xChannelSelector="R" yChannelSelector="G" />
      </filter>
      <linearGradient id="dusk" x1="0" y1="0" x2="1" y2="0">
        <stop offset="0" stopColor="#000" stopOpacity=".2" />
        <stop offset="1" stopColor="#000" stopOpacity="0" />
      </linearGradient>
    </defs>
    <g filter="url(#coast)">
      {sheets.map((sheet) => (
        <path key={sheet.id} transform={sheet.transform} d={sheet.land.join('')} fill="#928e8b" />
      ))}
      {sheets.map((sheet) => (
        <g key={sheet.id} transform={sheet.transform}>
          <path d={sheet.water.join('')} fill="#6e8187" />
          {sheet.rivers.map(([width, d]) => (
            <path key={d} d={d} fill="none" stroke="#6e8187" strokeWidth={width} strokeLinejoin="round" />
          ))}
        </g>
      ))}
    </g>
    <g filter="url(#frontier)">
      {sheets.map((sheet) => (
        <path
          key={sheet.id}
          transform={sheet.transform}
          d={sheet.borders.join('')}
          fill="none"
          stroke="#7a6f77"
          strokeWidth="1.6"
          strokeLinejoin="round"
          vectorEffect="non-scaling-stroke"
        />
      ))}
    </g>
    <g
      transform="translate(-0.9 -1.2)"
      fill="#524756"
      stroke="#969290"
      strokeOpacity=".7"
      strokeWidth="3"
      paintOrder="stroke"
      textAnchor="middle"
      fontFamily="'Noto Sans', 'Noto Sans CJK SC', 'DejaVu Sans', sans-serif"
      fontSize="16.5"
    >
      {labels.map(([x, y, width, text]) => (
        <text key={`${text}${y}`} x={x} y={y} textLength={width} lengthAdjust="spacingAndGlyphs">
          {text}
        </text>
      ))}
    </g>
    <rect x="852" y="208" width="12" height="1269" fill="url(#dusk)" />
  </MapDrawing>
);

const Switch = ({ on }) => (
  <Track $on={on}>
    <Thumb $on={on} />
  </Track>
);

const SettingRow = ({ title, sub, toggle }) => (
  <Row>
    <RowText>
      <RowTitle>{title}</RowTitle>
      <RowSub>{sub}</RowSub>
    </RowText>
    {toggle && <Switch on={toggle === 'on'} />}
  </Row>
);

const generalRows = [
  { title: 'Theme', sub: 'Dark', toggle: 'off' },
  { title: 'Notifications', sub: 'Allow system notifications', toggle: 'off' },
  { title: 'Tooltips', sub: 'Show tooltips in application', toggle: 'on' },
  { title: 'Saved urls', sub: 'Manage saved urls' },
  { title: 'Base maps', sub: 'Manage base maps' },
  { title: 'Nominatim URL', sub: 'Adjust the nominatim service used to search the' },
  { title: 'Overpass URL', sub: 'Adjust the interpreter used for Overpass data imports.' },
];

const SettingsPanel = () => (
  <Panel>
    <PanelHeader>
      <Icon name="chevronLeft" size={55} />
      <PanelTitle>Settings</PanelTitle>
    </PanelHeader>
    <PanelBody>
      <Settings>
        <Subheader $height={83}>
          General
          <Icon name="help" />
        </Subheader>
        {generalRows.map((row) => (
          <SettingRow key={row.title} {...row} />
        ))}
        <Divider />
        <Subheader $height={75}>Map</Subheader>
        <SettingRow title="Projection" sub="Adjust the map's projection" />
        <RadioGroup>
          <RadioRow>
            <RadioDot $on />
            Web Mercator (EPSG:3857)
          </RadioRow>
          <RadioRow>
            <RadioDot />
            Plate Carrée (EPSG:4326)
          </RadioRow>
        </RadioGroup>
        <SettingRow title="Zoom control" sub="Show zoom in/out control" toggle="on" />
      </Settings>
      <ScrollTrack>
        <ScrollThumb />
      </ScrollTrack>
    </PanelBody>
  </Panel>
);

const MapControls = () => (
  <Controls>
    <ControlGroup>
      <ControlButton><Icon name="map" /></ControlButton>
    </ControlGroup>
    <ControlGroup>
      <ControlButton><Icon name="grid" /></ControlButton>
    </ControlGroup>
    <ControlGroup>
      <ControlButton><LineIcon><path d="M14,23H34M24,13V33" /></LineIcon></ControlButton>
      <ControlButton><LineIcon><path d="M14,23H34" /></LineIcon></ControlButton>
    </ControlGroup>
    <ControlGroup>
      <ControlButton>3.0</ControlButton>
    </ControlGroup>
    <ControlGroup>
      <ControlButton><Icon name="camera" /></ControlButton>
    </ControlGroup>
    <ControlGroup $dim>
      <ControlButton $tone="#55534f"><Icon name="overscan" /></ControlButton>
      <ControlButton $tone="#55534f"><Icon name="layersOff" size={36} /></ControlButton>
      <ControlButton $tone="#55534f">
        <svg width="47" height="46" viewBox="0 0 47 46" fill="currentColor">
          <path d="M18,9.500L31,19.500L18,29.500L5,19.500ZM7.500,25L5.500,26.800L18,36.500L30.500,26.800L28.500,25L18,33ZM34.500,21.500L38.800,14.500L43,21.500ZM34.500,24.500L38.800,31L43,24.500Z" />
        </svg>
      </ControlButton>
    </ControlGroup>
    <ControlGroup>
      <ControlButton $tone="#101010"><Icon name="multiplePlus" /></ControlButton>
    </ControlGroup>
    <ControlGroup>
      <ControlButton $tone="#3d3d3d"><Icon name="marker" size={30} /></ControlButton>
      <ControlButton $tone="#3d3d3d">
        <LineIcon width={2.8}>
          <circle cx="14.500" cy="31.500" r="3.400" /><circle cx="32" cy="14" r="3.400" />
          <path d="M17,29L29.500,16.500" />
        </LineIcon>
      </ControlButton>
      <ControlButton $tone="#3d3d3d">
        <LineIcon width={2.8}>
          <circle cx="14.500" cy="13.500" r="3.200" /><circle cx="33" cy="13.500" r="3.200" />
          <circle cx="14.500" cy="32.500" r="3.200" /><circle cx="33" cy="32.500" r="3.200" />
          <path d="M18,13.500H29.500M18,32.500H29.500M14.500,17V29M33,17V29" />
        </LineIcon>
      </ControlButton>
      <ControlButton $tone="#3d3d3d">
        <LineIcon width={2.8}>
          <circle cx="33" cy="13.500" r="3.200" /><circle cx="14.500" cy="32.500" r="3.200" /><circle cx="33" cy="32.500" r="3.200" />
          <path d="M18,32.500H29.500M33,17V29M17,30L30.500,16" />
        </LineIcon>
      </ControlButton>
      <ControlButton $tone="#3d3d3d">
        <LineIcon width={2.8}>
          <path d="M28,13.500A11.200,11.200 0 1 0 33.500,19" />
          <circle cx="31" cy="15.500" r="3.200" />
          <circle cx="23" cy="23.500" r="2" fill="currentColor" stroke="none" />
        </LineIcon>
      </ControlButton>
    </ControlGroup>
  </Controls>
);

const SavedUrlsDialog = () => (
  <Dialog>
    <DialogTitle>
      <svg width="38" height="38" viewBox="0 0 24 24" fill="#3d6180"><path d={paths.cloud} /></svg>
      Saved urls
    </DialogTitle>
    <UrlRow>
      <UrlText>https://osm-<br />{'{s}.gs.mil/tiles/default/{z}/{x}/{y}.png'}</UrlText>
      <UrlActions>
        <svg width="38" height="38" viewBox="0 0 24 24" fill="#3d6180"><path d={paths.pencil} /></svg>
        <svg width="38" height="38" viewBox="0 0 24 24" fill="#f23350"><path d={paths.trash} /></svg>
      </UrlActions>
    </UrlRow>
    <DialogActions>
      <TextButton $color="#3d6180">Add url</TextButton>
      <TextButton $color="#242424">Close</TextButton>
    </DialogActions>
  </Dialog>
);

export default function App() {
  return (
    <>
      <GlobalStyle />
      <Page>
        <Window>
          <TitleBar>
            <Lights>
              <Light $color="#ec6a5e" />
              <Light $color="#f5bf4f" />
              <Light $color="#61c554" />
            </Lights>
            <AppTitle>MapCache</AppTitle>
          </TitleBar>
          <Body>
            <Rail>
              <LogoSlot><Logo /></LogoSlot>
              <RailItem><Icon name="package" /></RailItem>
              <RailItem><Icon name="layersOutline" /></RailItem>
              <RailItem $active><Icon name="cog" /></RailItem>
            </Rail>
            <SettingsPanel />
            <MapPane>
              <WorldMap />
              <SearchBar>
                <MapOffIcon />
                <SearchDivider />
                <Icon name="magnify" />
              </SearchBar>
              <MapControls />
              <ScaleBox>
                <ScaleLine $width={105}>1000 km</ScaleLine>
                <ScaleLine $width={85} $lower>500 mi</ScaleLine>
              </ScaleBox>
              <Coordinates>Lat, Lng: 47.279229, 7.382813</Coordinates>
              <Attribution>Leaflet, Map data © OpenStreetMap contributors, CC-BY-SA</Attribution>
            </MapPane>
          </Body>
          <SavedUrlsDialog />
        </Window>
        <CalloutLines width="2152" height="1630" viewBox="0 0 2152 1630" fill="none" stroke="#6eeffc" strokeWidth="7">
          <path d="M1224,79.500H1287V824M1450.500,79.500H1343.500V824M808.500,978V1545.500H882.500" />
          <rect x="1262.500" y="825.500" width="48.500" height="44" rx="1" />
          <rect x="1324" y="825.500" width="40" height="44" rx="1" />
          <rect x="745.500" y="920.500" width="125" height="56" rx="1" />
        </CalloutLines>
        <CalloutText $top={42} $left={971}>Edit url</CalloutText>
        <CalloutText $top={42} $left={1485}>Delete url</CalloutText>
        <CalloutText $top={1508} $left={917}>Add url</CalloutText>
      </Page>
    </>
  );
}
